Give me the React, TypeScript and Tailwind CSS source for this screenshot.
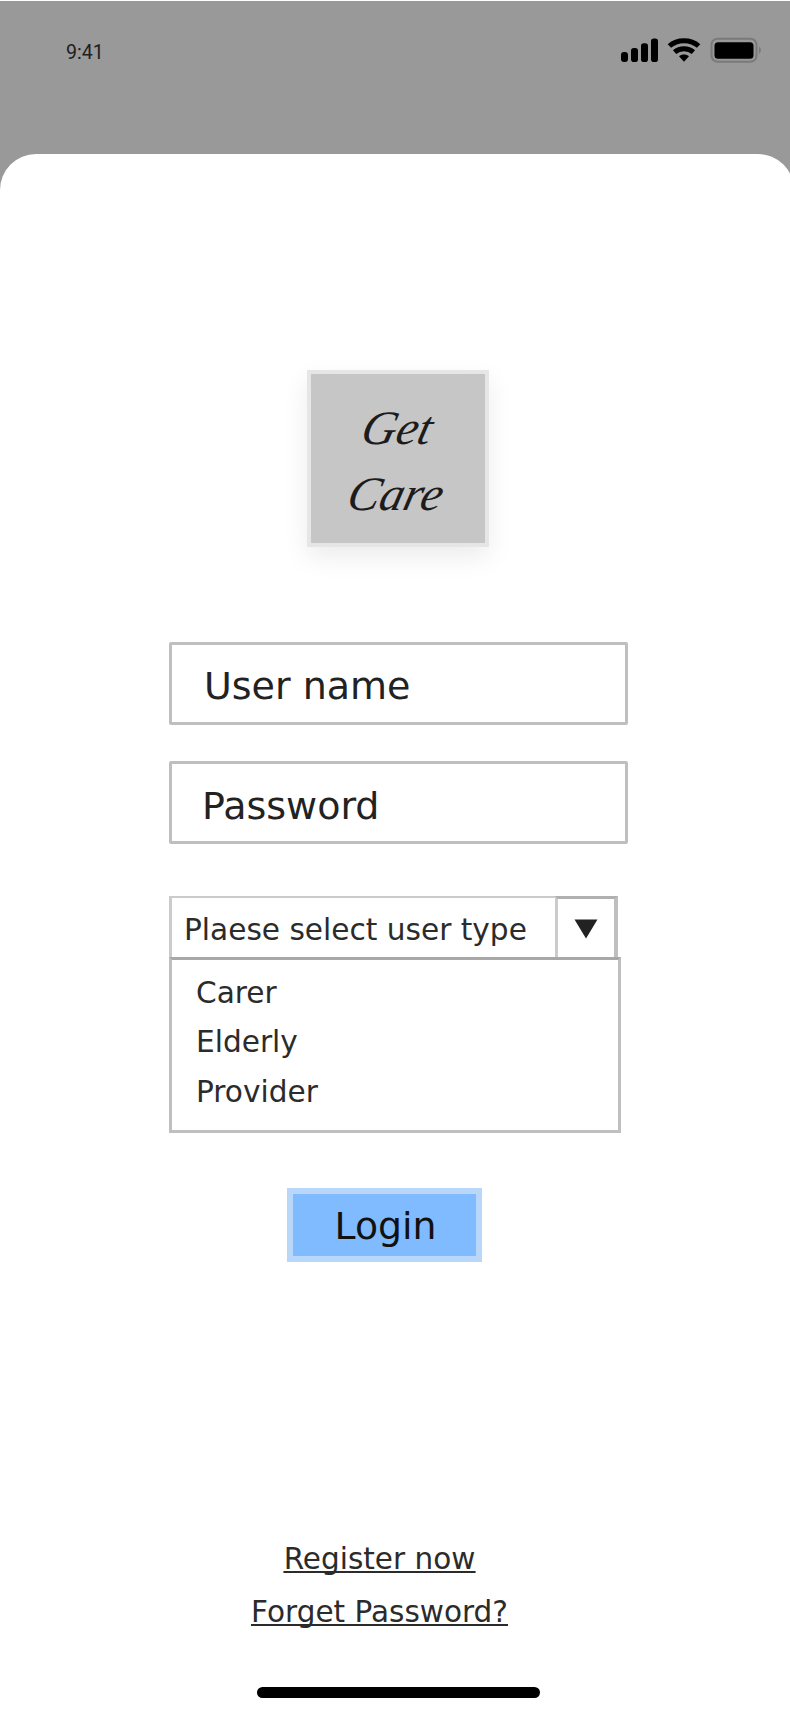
import type { ReactNode } from "react";

const sans = "font-['DejaVu_Sans',sans-serif]";

function StatusBar() {
  return (
    <header className="flex h-[153px] shrink-0 items-start justify-between pl-[66px] pr-[27px]">
      <time className="mt-[40px] font-['Roboto',sans-serif] text-[19.6px] leading-[24px] text-[#202020]">
        9:41
      </time>
      <div className="mt-[36px] flex items-start">
        <svg className="h-[26px] w-[40px]" viewBox="0 0 40 26">
          <rect x="0" y="15" width="7" height="10" rx="3" />
          <rect x="10" y="11" width="7" height="14" rx="2.8" />
          <rect x="20" y="6.3" width="7" height="18.7" rx="2.8" />
          <rect x="30" y="1.5" width="7" height="23.5" rx="2.8" />
        </svg>
        <svg className="ml-[6px] h-[26px] w-[34px]" viewBox="0 0 34 26" fill="none" stroke="#000" strokeWidth="5">
          <path d="M2.4 9C10.2 1.9 23.8 1.9 31.6 9" />
          <path d="M7.6 15.2C12.8 10.5 21.2 10.5 26.4 15.2" />
          <path d="M12 19.3C14.6 17 19.4 17 22 19.3L17 24.8Z" fill="#000" stroke="none" />
        </svg>
        <svg className="ml-[8px] h-[26px] w-[54px]" viewBox="0 0 54 26">
          <rect x="2.5" y="1.8" width="45" height="23" rx="6" fill="none" stroke="#7a7a7a" strokeWidth="2" />
          <rect x="5.5" y="5.2" width="39" height="16.5" rx="3.5" />
          <path d="M50 9.5Q54 13.2 50 17Z" fill="#7a7a7a" />
        </svg>
      </div>
    </header>
  );
}

function Logo() {
  return (
    <div className="ml-[307px] mt-[216px] flex h-[177px] w-[182px] shrink-0 flex-col items-center border-4 border-[#e6e6e6] bg-[#c6c6c6] pt-[21px] font-['Liberation_Serif',serif] text-[48px] italic leading-[66px] text-[#1c1c1c] shadow-[0_10px_24px_rgba(0,0,0,0.08)]">
      <span className="-skew-x-[14deg]">Get</span>
      <span className="-ml-[4px] -skew-x-[14deg]">Care</span>
    </div>
  );
}

function Field({ children, className }: { children: ReactNode; className: string }) {
  return (
    <div
      className={`ml-[169px] h-[83px] w-[459px] shrink-0 rounded-[2px] border-3 border-[#bfbfbf] text-[38px] leading-[80px] text-[#222] ${className}`}
    >
      {children}
    </div>
  );
}

function UserTypeSelect() {
  return (
    <div className="ml-[169px] mt-[52px] shrink-0 text-[29.6px] text-[#2b2b2b]">
      <div className="flex h-[61px] w-[449px]">
        <div className="w-[386px] border-t-2 border-l-3 border-[#cbcbcb] pl-[12px] leading-[64px] whitespace-nowrap">
          Plaese select user type
        </div>
        <div className="flex w-[63px] justify-center border-t-3 border-r-4 border-l-3 border-[#bfbfbf] border-t-[#b0b0b0] border-l-[#cbcbcb] pt-[20px]">
          <svg className="h-[20px] w-[24px]" viewBox="0 0 24 20">
            <path d="M0.5 0.5H23.5L12 19.5Z" fill="#222" />
          </svg>
        </div>
      </div>
      <ul className="h-[176px] w-[452px] border-3 border-[#bfbfbf] border-t-[#a8a8a8] pl-[24px] pt-[9px]">
        <li className="leading-[49px]">Carer</li>
        <li className="leading-[49px]">Elderly</li>
        <li className="leading-[51px]">Provider</li>
      </ul>
    </div>
  );
}

export default function App() {
  return (
    <div className="flex h-[1718px] w-[790px] flex-col overflow-hidden border-t border-white bg-[#999]">
      <StatusBar />
      <main className={`flex w-[794px] grow flex-col rounded-t-[36px] bg-white ${sans}`}>
        <Logo />
        <Field className="mt-[95px] pl-[32px] pt-[1px]">User name</Field>
        <Field className="mt-[36px] pl-[30px] pt-[2px]">Password</Field>
        <UserTypeSelect />
        <button className="ml-[287px] mt-[55px] h-[74px] w-[195px] shrink-0 border-6 border-[#b9d7f8] bg-[#80bbff] pl-[2px] pt-[1px] text-[37.8px] leading-[62px] text-[#111]">
          Login
        </button>
        <nav className="ml-[251px] mt-[271px] flex w-[257px] shrink-0 flex-col items-center text-[29.5px] leading-[53px] text-[#2b2b2b] underline decoration-[1.5px] underline-offset-[2px] [text-decoration-skip-ink:none]">
          <a className="whitespace-nowrap">Register now</a>
          <a className="whitespace-nowrap">Forget Password?</a>
        </nav>
        <div className="ml-[257px] mt-[48px] h-[11px] w-[283px] shrink-0 rounded-full bg-black" />
      </main>
    </div>
  );
}
